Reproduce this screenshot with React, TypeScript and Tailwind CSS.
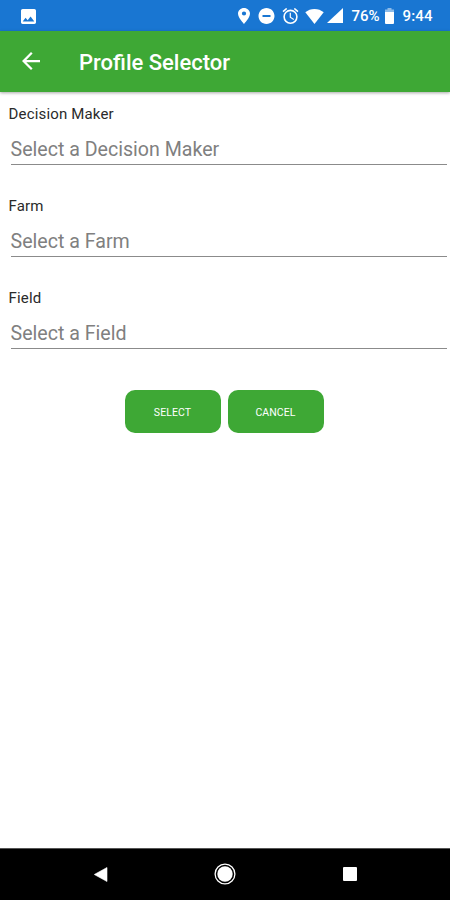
import React from "react";

function Field({ label, hint }: { label: string; hint: string }) {
  return (
    <label className="block h-[92px]">
      <span className="block h-5 pl-[8.500px] text-[15px] leading-[21px] tracking-[0.17px] text-[#2a2a2a]">{label}</span>
      <span className="mt-[11px] ml-[11px] mr-[3px] block h-[30px] border-b border-[#8b8b8b] text-[19.600px] leading-[29px] text-[#808080]">
        <span className="-ml-[0.500px]">{hint}</span>
      </span>
    </label>
  );
}

function StatusBar() {
  return (
    <div className="flex h-[31px] items-start bg-[#1976d2] text-[15px] font-medium text-white">
      <svg className="ml-[21px] mt-[9px] h-[15px] w-[15px]" viewBox="0 0 18 18" fill="currentColor">
        <path d="M18 16V2c0-1.100-.9-2-2-2H2C.9 0 0 .9 0 2v14c0 1.100.9 2 2 2h14c1.100 0 2-.9 2-2zM5.500 10.500l2.500 3.010L11.500 9l4.500 6H2l3.500-4.500z" />
      </svg>
      <svg className="ml-[202px] mt-[8px] h-4 w-[12px]" viewBox="5 2 14 20" preserveAspectRatio="none" fill="currentColor">
        <path d="M12 2C8.130 2 5 5.130 5 9c0 5.250 7 13 7 13s7-7.750 7-13c0-3.870-3.130-7-7-7zm0 9.500a2.500 2.500 0 0 1 0-5 2.500 2.500 0 0 1 0 5z" />
      </svg>
      <svg className="ml-[8px] mt-[8px] h-4 w-[17px]" viewBox="2 2 20 20" fill="currentColor">
        <path d="M12 2C6.480 2 2 6.480 2 12s4.480 10 10 10 10-4.480 10-10S17.520 2 12 2zm5 11.300H7v-2.600h10v2.600z" />
      </svg>
      <svg className="ml-[7px] mt-[8px] h-4 w-[17px]" viewBox="2 2 20 20" fill="currentColor">
        <path d="M22 5.720l-4.600-3.860-1.290 1.530 4.600 3.860L22 5.720zM7.880 3.390L6.600 1.860 2 5.710l1.290 1.530 4.590-3.850zM12.500 8H11v6l4.750 2.850.75-1.230-4-2.370V8zM12 4a9 9 0 1 0 0 18 9 9 0 0 0 0-18zm0 16a7 7 0 1 1 0-14 7 7 0 0 1 0 14z" />
      </svg>
      <svg className="ml-[6px] mt-[9px] h-[15px] w-[19px]" viewBox="0 0 19 15" fill="currentColor">
        <path d="M.3 3.300C2.900 1.200 6 0 9.500 0s6.600 1.200 9.200 3.300L9.500 15z" />
      </svg>
      <svg className="ml-[3px] mt-[8px] h-[15px] w-[16px]" viewBox="0 0 16 15" fill="currentColor">
        <path d="M0 15H16V0z" />
      </svg>
      <span className="ml-[8.500px] mt-[6px] w-[30px] whitespace-nowrap leading-[21px]">76%</span>
      <svg className="ml-[3.500px] mt-[8px] h-4 w-[9px]" viewBox="0 0 9 16" fill="currentColor">
        <path opacity=".5" d="M2.500 0h4v1.500H9V5H0V1.500h2.500z" />
        <path d="M0 4h9v11a1 1 0 0 1-1 1H1a1 1 0 0 1-1-1z" />
      </svg>
      <span className="ml-[8.500px] mt-[6px] whitespace-nowrap leading-[21px] tracking-[0.15px]">9:44</span>
    </div>
  );
}

function ActionButton({ children }: { children: string }) {
  return (
    <button className="h-[43px] w-[96px] rounded-[10px] bg-[#3ea835] pt-[2px] text-[10.500px] tracking-[0.1px] text-white">
      {children}
    </button>
  );
}

export default function App() {
  return (
    <div className="flex h-[900px] w-[450px] flex-col overflow-hidden bg-white font-[Roboto,sans-serif]">
      <StatusBar />
      <header className="flex h-[61px] items-center bg-[#3ea835] text-white shadow-[0_1px_3px_rgba(0,0,0,0.35)]">
        <svg className="mb-px ml-[21.500px] h-[18px] w-[18px]" viewBox="4 4 16 16" fill="currentColor">
          <path d="M20 11H7.830l5.590-5.590L12 4l-8 8 8 8 1.410-1.410L7.830 13H20v-2z" />
        </svg>
        <h1 className="ml-[39.500px] pt-[2px] text-[22px] font-medium leading-7">Profile Selector</h1>
      </header>
      <main className="flex-1 pt-[12px]">
        <Field label="Decision Maker" hint="Select a Decision Maker" />
        <Field label="Farm" hint="Select a Farm" />
        <Field label="Field" hint="Select a Field" />
        <div className="mt-[10px] flex justify-center gap-[7px] pr-[2px]">
          <ActionButton>SELECT</ActionButton>
          <ActionButton>CANCEL</ActionButton>
        </div>
      </main>
      <nav className="flex h-[52px] items-center border-t border-[#555] bg-black pb-px text-white">
        <svg className="ml-[94px] h-[15px] w-[14px]" viewBox="0 0 14 15" fill="currentColor">
          <path d="M13 .5v14L.3 7.500z" stroke="currentColor" strokeWidth=".6" strokeLinejoin="round" />
        </svg>
        <svg className="ml-[106px] h-[22px] w-[22px]" viewBox="0 0 22 22" fill="currentColor">
          <circle cx="11" cy="11" r="9.900" fill="none" stroke="currentColor" strokeWidth="1.300" />
          <circle cx="11" cy="11" r="7.700" />
        </svg>
        <span className="ml-[107px] h-[14px] w-[14px] rounded-[1px] bg-white" />
      </nav>
    </div>
  );
}
